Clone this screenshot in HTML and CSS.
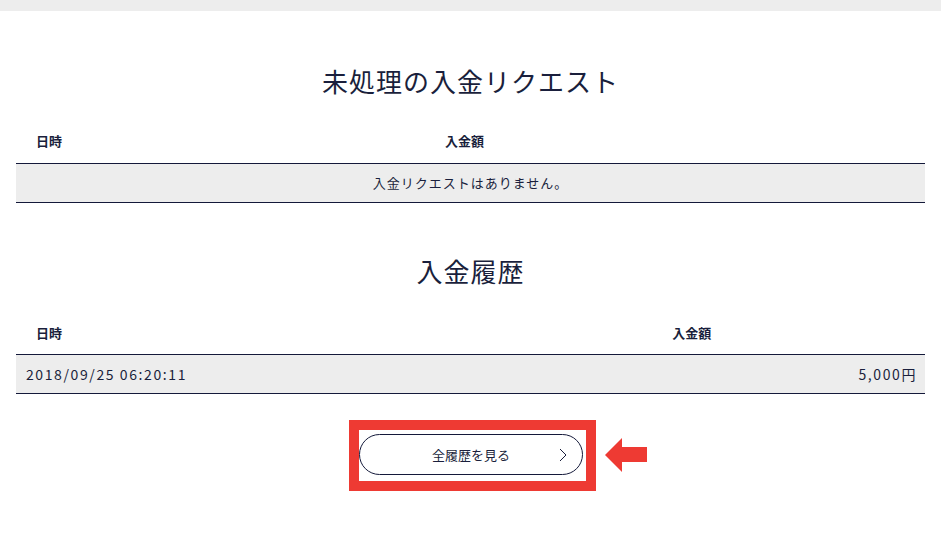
FILE: index.html
```html
<html>
<head>
    <title>入金履歴</title>
    <link rel="stylesheet" href="styles.css">
</head>
<body>
    <div class="top-bar"></div>
    <div class="content">
        <h2 class="section-title">未処理の入金リクエスト</h2>
        <table class="request-table">
            <tr>
                <th class="col-date">日時</th>
                <th>入金額</th>
            </tr>
            <tr>
                <td colspan="2" class="empty">入金リクエストはありません。</td>
            </tr>
        </table>

        <h2 class="section-title history-title">入金履歴</h2>
        <table class="history-table">
            <tr>
                <th class="col-date">日時</th>
                <th>入金額</th>
            </tr>
            <tr>
                <td>2018/09/25 06:20:11</td>
                <td class="amount">5,000円</td>
            </tr>
        </table>

        <div class="more-area">
            <div class="highlight">
                <a class="more-btn" href="#">
                    <span>全履歴を見る</span>
                    <svg class="chevron" width="8" height="14" viewBox="0 0 8 14">
                        <polyline points="1,1 7,7 1,13" fill="none" stroke="#1a1f3c" stroke-width="1"/>
                    </svg>
                </a>
                <svg class="arrow" width="42" height="34" viewBox="0 0 42 34">
                    <polygon points="0,17 17,0 17,9 42,9 42,24 17,24 17,34" fill="#ee3a33"/>
                </svg>
            </div>
        </div>
    </div>
</body>
</html>
```

FILE: styles.css
```css
body {
    margin: 0;
    font-family: "Noto Sans CJK JP", "Noto Sans", sans-serif;
    color: #1a1f3c;
    background: #ffffff;
}
.top-bar {
    height: 11px;
    background-color: #ededed;
}
.content {
    padding: 0 16px;
}
.section-title {
    margin: 50px 0 19px;
    font-size: 26px;
    font-weight: 400;
    line-height: 39px;
    letter-spacing: 1px;
    text-align: center;
}
.history-title {
    margin-top: 48px;
    margin-bottom: 21px;
}
table {
    width: 100%;
    border-collapse: collapse;
    font-size: 13px;
}
th {
    height: 44px;
    padding: 0 0 0 20px;
    text-align: left;
    font-weight: bold;
    border-bottom: 1px solid #14193a;
}
td {
    height: 39px;
    padding: 0 10px;
    background-color: #ededed;
    border-bottom: 1px solid #14193a;
    font-size: 14px;
    letter-spacing: 1.6px;
}
.request-table .col-date {
    width: 45%;
}
.history-table .col-date {
    width: 70%;
}
.empty {
    text-align: center;
    font-size: 13px;
    letter-spacing: 1px;
}
.amount {
    text-align: right;
    padding-right: 8px;
}
.more-area {
    display: flex;
    justify-content: center;
    margin-top: 26px;
    padding-left: 4px;
}
.highlight {
    position: relative;
    border: 10px solid #ee3a33;
    padding: 4px 3px 6px 0;
}
.more-btn {
    display: flex;
    align-items: center;
    justify-content: center;
    position: relative;
    box-sizing: border-box;
    width: 224px;
    height: 41px;
    border: 1px solid #14193a;
    border-radius: 21px;
    color: #1a1f3c;
    font-size: 13px;
    text-decoration: none;
}
.chevron {
    position: absolute;
    right: 15px;
    top: 13px;
}
.arrow {
    position: absolute;
    left: calc(100% + 19px);
    top: 8px;
}
```
